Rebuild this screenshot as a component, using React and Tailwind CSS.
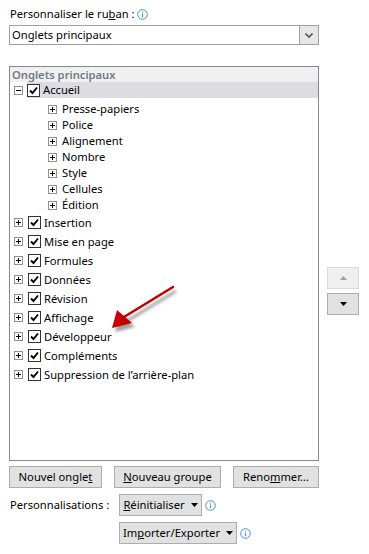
import React from "react";

const InfoIcon = () => (
  <svg width="11" height="11" viewBox="0 0 11 11" className="inline-block">
    <circle cx="5.5" cy="5.5" r="4.8" fill="white" stroke="#4a8fd8" strokeWidth="1" />
    <rect x="5" y="2.6" width="1" height="1" fill="#4a8fd8" />
    <rect x="5" y="4.4" width="1" height="4" fill="#4a8fd8" />
  </svg>
);

const PlusBox = ({ minus }) => (
  <span className="w-[9px] h-[9px] border border-[#919191] bg-white flex items-center justify-center relative shrink-0">
    <span className="absolute w-[5px] h-px bg-black" />
    {!minus && <span className="absolute w-px h-[5px] bg-black" />}
  </span>
);

const Check = () => (
  <span className="w-[13px] h-[13px] border border-[#333] bg-white flex items-center justify-center shrink-0">
    <svg width="9" height="9" viewBox="0 0 9 9">
      <path d="M1 4.5 L3.5 7 L8 1.5" fill="none" stroke="black" strokeWidth="1.9" />
    </svg>
  </span>
);

const Caret = () => (
  <svg width="7" height="4" viewBox="0 0 7 4" className="ml-[6px]">
    <path d="M0 0 H7 L3.5 4 Z" fill="black" />
  </svg>
);

const subGroups = ["Presse-papiers", "Police", "Alignement", "Nombre", "Style", "Cellules", "Édition"];
const tabs = [
  "Insertion",
  "Mise en page",
  "Formules",
  "Données",
  "Révision",
  "Affichage",
  "Développeur",
  "Compléments",
  "Suppression de l’arrière-plan",
];

const Btn = ({ children, className = "" }) => (
  <button className={"h-[22px] border border-[#adadad] bg-[#e1e1e1] flex items-center justify-center text-black " + className}>
    {children}
  </button>
);

export default function App() {
  return (
    <div className="w-[369px] h-[554px] bg-white relative text-[11.2px] text-black font-['Noto_Sans',sans-serif] leading-none overflow-hidden">
      <div className="pl-[9px] pt-[8px]">
        <div className="flex items-center h-[12px] pl-[1px] gap-[2px]">
          <span>
            Personnaliser le ru<span className="underline">b</span>an :
          </span>
          <InfoIcon />
        </div>

        <div className="mt-[5px] w-[310px] h-[20px] border border-[#a0a0a0] flex items-stretch">
          <div className="flex-1 flex items-center pl-[2px]">Onglets principaux</div>
          <div className="w-[19px] bg-[#e6e6e6] border-l border-[#a0a0a0] flex items-center justify-center">
            <svg width="8" height="5" viewBox="0 0 8 5">
              <path d="M0.5 0.5 L4 4 L7.5 0.5" fill="none" stroke="#555" strokeWidth="1.6" />
            </svg>
          </div>
        </div>

        <div className="mt-[21px] flex">
          <div className="w-[310px] h-[395px] border border-[#828790] flex flex-col">
            <div className="h-[15px] bg-[#f0f0f0] flex items-center pl-[2px] font-semibold text-[#6e7a86]">
              Onglets principaux
            </div>
            <div className="h-[16px] flex items-center">
              <div className="w-[4px]" />
              <PlusBox minus />
              <div className="ml-[4px] flex-1 h-full bg-[#dcdce2] flex items-center">
                <Check />
                <span className="ml-[3px]">Accueil</span>
              </div>
            </div>
            <div className="pt-[3px]">
              {subGroups.map((g) => (
                <div key={g} className="h-[16px] flex items-center pl-[38px]">
                  <PlusBox />
                  <span className="ml-[5px]">{g}</span>
                </div>
              ))}
            </div>
            {tabs.map((t) => (
              <div key={t} className="h-[19px] flex items-center pl-[4px]">
                <PlusBox />
                <span className="ml-[5px]" />
                <Check />
                <span className="ml-[3px]">{t}</span>
              </div>
            ))}
          </div>

          <div className="ml-[8px] mt-[201px] flex flex-col gap-[4px]">
            <div className="w-[32px] h-[22px] border border-[#d9d9d9] bg-[#efefef] flex items-center justify-center">
              <svg width="7" height="4" viewBox="0 0 7 4">
                <path d="M0 4 H7 L3.5 0 Z" fill="#a0a0a0" />
              </svg>
            </div>
            <div className="w-[32px] h-[22px] border border-[#adadad] bg-[#e1e1e1] flex items-center justify-center">
              <svg width="7" height="4" viewBox="0 0 7 4">
                <path d="M0 0 H7 L3.5 4 Z" fill="black" />
              </svg>
            </div>
          </div>
        </div>

        <div className="mt-[5px] flex gap-[12px]">
          <Btn className="w-[93px]">
            Nouvel ongle<span className="underline">t</span>
          </Btn>
          <Btn className="w-[107px]">
            <span className="underline">N</span>ouveau groupe
          </Btn>
          <Btn className="w-[86px]">
            Reno<span className="underline">m</span>mer...
          </Btn>
        </div>

        <div className="mt-[6px] flex items-center">
          <span className="w-[110px] pl-[1px]">Personnalisations :</span>
          <Btn className="w-[83px]">
            <span className="underline">R</span>éinitialiser
            <Caret />
          </Btn>
          <span className="ml-[3px]">
            <InfoIcon />
          </span>
        </div>

        <div className="mt-[6px] flex items-center pl-[110px]">
          <Btn className="w-[118px]">
            Im<span className="underline">p</span>orter/Exporter
            <Caret />
          </Btn>
          <span className="ml-[3px]">
            <InfoIcon />
          </span>
        </div>
      </div>

      <svg className="absolute left-0 top-0 pointer-events-none" width="369" height="554">
        <defs>
          <filter id="sh" x="-50%" y="-50%" width="200%" height="200%">
            <feGaussianBlur stdDeviation="1.6" />
          </filter>
        </defs>
        <g transform="translate(3,4)" filter="url(#sh)" opacity="0.55">
          <line x1="173" y1="287" x2="124" y2="317" stroke="#555" strokeWidth="3" />
          <path d="M112 328 L117 310 L132 323 Z" fill="#555" />
        </g>
        <line x1="173" y1="287" x2="124" y2="317" stroke="#c40000" strokeWidth="2.6" strokeLinecap="round" />
        <path d="M112 328 L117 310 L132 323 Z" fill="#c40000" />
      </svg>
    </div>
  );
}
